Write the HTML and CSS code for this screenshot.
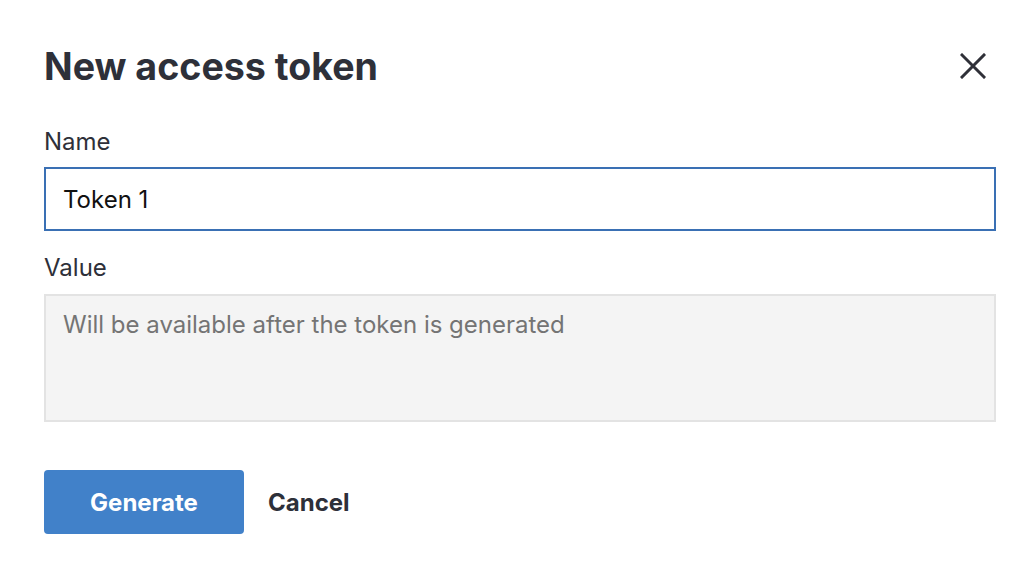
FILE: index.html
```html
<!DOCTYPE html>
<html>
<head>
<meta charset="utf-8">
<link rel="stylesheet" href="styles.css">
</head>
<body>
<div class="dialog">
  <div class="header">
    <h1 class="title">New access token</h1>
    <button class="close" aria-label="Close">
      <svg width="26" height="26" viewBox="0 0 26 26"><path d="M2 2 L24 24 M24 2 L2 24" stroke="#2f3038" stroke-width="3" stroke-linecap="square" fill="none"/></svg>
    </button>
  </div>
  <label class="label">Name</label>
  <div class="input">Token 1</div>
  <label class="label label-value">Value</label>
  <div class="textarea">Will be available after the token is generated</div>
  <div class="actions">
    <button class="btn-primary">Generate</button>
    <button class="btn-link">Cancel</button>
  </div>
</div>
</body>
</html>
```

FILE: styles.css
```css
html, body { margin: 0; padding: 0; background: #fff; }
body { font-family: Inter, "Noto Sans", sans-serif; color: #2e3039; }
.dialog { padding: 38px 38px 0 44px; }
.header { display: flex; justify-content: space-between; align-items: center; height: 56px; }
.title { margin: 0; font-size: 37.6px; font-weight: 700; color: #2e3039; }
.close { background: none; border: 0; padding: 0; margin-right: 10px; width: 26px; height: 26px; display: flex; }
.label { display: block; font-size: 24px; color: #2e3039; margin-top: 34px; line-height: 28px; }
.label-value { margin-top: 23px; }
.input { margin-top: 11px; height: 64px; box-sizing: border-box; border: 2px solid #3a70b4; padding: 0 17px; display: flex; align-items: center; font-size: 24px; color: #111; }
.textarea { margin-top: 12px; height: 128px; box-sizing: border-box; border: 2px solid #e3e3e3; background: #f4f4f4; padding: 14px 17px; font-size: 24px; color: #747474; line-height: 30px; }
.actions { display: flex; align-items: center; margin-top: 48px; gap: 24px; }
.btn-primary { width: 200px; height: 64px; border: 0; border-radius: 4px; background: #4181c9; color: #fff; font-family: inherit; font-weight: 700; font-size: 24px; }
.btn-link { background: none; border: 0; padding: 0; font-family: inherit; font-weight: 700; font-size: 24px; color: #2e3039; }
```
